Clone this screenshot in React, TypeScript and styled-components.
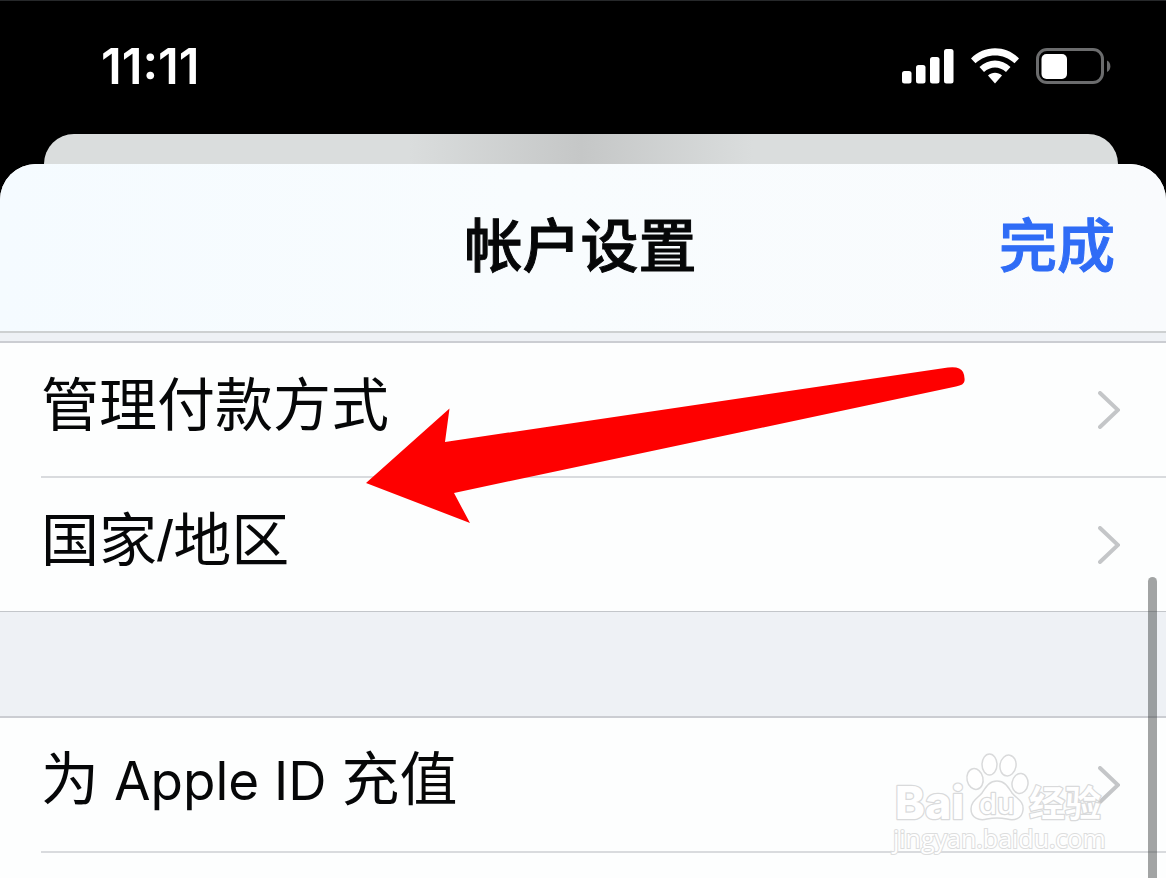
import React from "react";
import styled, { createGlobalStyle } from "styled-components";

const GlobalStyle = createGlobalStyle`
  *, *::before, *::after { box-sizing: border-box; }
  body {
    margin: 0;
    background: #000;
    font-family: Inter, "Noto Sans CJK SC", sans-serif;
    color: #060708;
  }
`;

const Screen = styled.div`
  position: relative;
  display: flex;
  flex-direction: column;
  min-height: 100vh;
  overflow: hidden;
  background: #000;
  border-top: 1px solid #26282a;
`;

const StatusBar = styled.div`
  display: flex;
  align-items: center;
  justify-content: space-between;
  height: 133px;
  padding: 0 55px 3px 101px;
`;

const Time = styled.time`
  padding-top: 2px;
  font-size: 49px;
  line-height: 56px;
  font-weight: 600;
  color: #fff;
`;

const StatusIcons = styled.div`
  display: flex;
  align-items: center;
  gap: 17px;

  svg { display: block; }
`;

const BackCard = styled.div`
  height: 30px;
  margin: 0 48px 0 44px;
  border-radius: 30px 30px 0 0;
  background: linear-gradient(90deg, #dadddd 34%, #c5c7c7 50%, #dadddd 66%);
`;

const Sheet = styled.main`
  position: relative;
  display: flex;
  flex: 1;
  flex-direction: column;
  border-radius: 36px 36px 0 0;
  background: #fdfefe;
  overflow: hidden;
`;

const Header = styled.header`
  display: grid;
  grid-template-columns: 1fr auto 1fr;
  align-items: center;
  height: 169px;
  padding: 0 51px 3px 46px;
  border-bottom: 2px solid #cdd0d1;
  background: linear-gradient(90deg, #f5fbff, #f8fcfe 45%, #f9fbfd);
`;

const Title = styled.h1`
  grid-column: 2;
  margin: 0;
  font-size: 58px;
  line-height: 84px;
  font-weight: 500;
  -webkit-text-stroke: 1px currentColor;
`;

const DoneButton = styled.button`
  justify-self: end;
  padding: 0;
  border: 0;
  background: none;
  font: inherit;
  font-size: 58px;
  line-height: 84px;
  font-weight: 500;
  -webkit-text-stroke: 1px currentColor;
  color: #2f6cf6;
  cursor: pointer;
`;

const SectionGap = styled.div<{ $height: number }>`
  height: ${({ $height }) => $height}px;
  border-bottom: 2px solid #cbcdd2;
  background: #eef1f5;
`;

const Group = styled.ul<{ $closed?: boolean }>`
  margin: 0;
  padding: 0;
  list-style: none;
  border-bottom: ${({ $closed }) => ($closed ? "1px solid #c3c6ca" : "0")};
`;

const Item = styled.li<{ $divider?: boolean }>`
  margin-left: 41px;
  border-bottom: ${({ $divider }) => ($divider ? "2px solid #d9dbde" : "0")};
`;

const RowLink = styled.a`
  display: flex;
  align-items: center;
  justify-content: space-between;
  height: 133px;
  padding-right: 46px;
  color: inherit;
  text-decoration: none;

  svg { display: block; }
`;

const RowLabel = styled.span`
  padding-bottom: 10px;
  font-size: 58px;
  line-height: 84px;
  white-space: nowrap;
`;

const Latin = styled.span`
  font-size: 53px;
`;

const Slash = styled.span`
  font-family: "Liberation Sans", sans-serif;
  font-size: 58px;
  line-height: 1;
`;

const ScrollThumb = styled.div`
  position: absolute;
  top: 413px;
  right: 9px;
  bottom: -10px;
  width: 9px;
  border-radius: 5px;
  background: rgba(60, 64, 64, 0.47);
`;

const ArrowMark = styled.svg`
  position: absolute;
  top: 202px;
  left: 366px;
  pointer-events: none;
`;

const Watermark = styled.div`
  position: absolute;
  right: 61px;
  bottom: 26px;
  width: 212px;
  pointer-events: none;

  svg { display: block; overflow: visible; }
`;

const WatermarkUrl = styled.div`
  font-family: "Open Sans", "Noto Sans", sans-serif;
  font-size: 25px;
  line-height: 28px;
  text-align: center;
  white-space: nowrap;
  color: #fff;
  -webkit-text-stroke: 2px #dcdddd;
  paint-order: stroke fill;
`;

const Chevron = () => (
  <svg width="22" height="38" viewBox="0 0 22 38" fill="none" aria-hidden="true">
    <path d="M2 2L20 19L2 36" stroke="#c4c6c8" strokeWidth="4" strokeLinejoin="miter" strokeLinecap="round" />
  </svg>
);

const Signal = () => (
  <svg width="52" height="36" viewBox="0 0 52 36" fill="#fff" aria-hidden="true">
    <rect x="0" y="23" width="9.5" height="12.5" rx="2.5" />
    <rect x="14" y="17" width="9.5" height="18.5" rx="2.5" />
    <rect x="28" y="9" width="9.5" height="26.5" rx="2.5" />
    <rect x="42" y="1" width="9.5" height="34.5" rx="2.5" />
  </svg>
);

const Wifi = () => (
  <svg width="48" height="36" viewBox="0 0 48 36" fill="#fff" aria-hidden="true">
    <path d="M0 10.5C13-3.2 35-3.2 48 10.5L43.5 15.2C32.5 4.8 15.5 4.8 4.5 15.2Z" />
    <path d="M8.5 19C17.2 10.2 30.8 10.2 39.5 19L35 24C28.5 18 19.5 18 13 24Z" />
    <path d="M17 27.5C21 23.8 27 23.8 31 27.5L24 35.5Z" />
  </svg>
);

const Battery = () => (
  <svg width="75" height="36" viewBox="0 0 75 36" fill="none" aria-hidden="true">
    <rect x="1.5" y="1.5" width="65" height="33" rx="9.5" stroke="#6b6c6d" strokeWidth="3" />
    <rect x="5.5" y="6" width="25.5" height="25" rx="5" fill="#fff" />
    <path d="M71 12.5C75.5 14.5 75.5 22 71 24Z" fill="#6b6c6d" />
  </svg>
);

const BaiduLogo = () => (
  <svg width="212" height="72" viewBox="0 0 212 72" aria-hidden="true">
    <g fill="#fff" stroke="#d9dadb" strokeWidth="1.5">
      <ellipse cx="82" cy="27" rx="8" ry="10.5" transform="rotate(-12 82 27)" />
      <ellipse cx="96.5" cy="12.5" rx="7.5" ry="10.5" />
      <ellipse cx="115" cy="13.5" rx="8" ry="10.5" transform="rotate(10 115 13.5)" />
      <ellipse cx="127" cy="31.5" rx="8" ry="10" transform="rotate(8 127 31.5)" />
      <path d="M104 29C112 29 115 35 119 41C124 47 131 49 130 58C129 67 121 69 114 67C107 65.5 101 65.5 94 67C86 69 78 66 78 57C78 49 85 46 89 41C93 35 96 29 104 29Z" />
    </g>
    <g fill="#fff" stroke="#d9dadb" strokeWidth="2.5" strokeLinejoin="round" paintOrder="stroke">
      <text x="2" y="67" fontFamily="Inter" fontWeight="800" fontSize="45">Bai</text>
      <text x="86" y="62" fontFamily="Inter" fontWeight="500" fontSize="29">du</text>
      <text x="136" y="65" fontFamily="Noto Sans CJK SC" fontWeight="700" fontSize="36">经验</text>
    </g>
  </svg>
);

export default function App() {
  return (
    <>
      <GlobalStyle />
      <Screen lang="zh-CN">
        <StatusBar>
          <Time>11:11</Time>
          <StatusIcons>
            <Signal />
            <Wifi />
            <Battery />
          </StatusIcons>
        </StatusBar>
        <BackCard />
        <Sheet>
          <Header>
            <Title>帐户设置</Title>
            <DoneButton type="button">完成</DoneButton>
          </Header>
          <SectionGap $height={10} />
          <Group $closed>
            <Item $divider>
              <RowLink href="#payment">
                <RowLabel>管理付款方式</RowLabel>
                <Chevron />
              </RowLink>
            </Item>
            <Item>
              <RowLink href="#region">
                <RowLabel>国家<Slash>/</Slash>地区</RowLabel>
                <Chevron />
              </RowLink>
            </Item>
          </Group>
          <SectionGap $height={106} />
          <Group>
            <Item $divider>
              <RowLink href="#top-up">
                <RowLabel>
                  为<Latin> Apple ID </Latin>充值
                </RowLabel>
                <Chevron />
              </RowLink>
            </Item>
          </Group>
          <Watermark>
            <BaiduLogo />
            <WatermarkUrl>jingyan.baidu.com</WatermarkUrl>
          </Watermark>
          <ArrowMark width="600" height="158" viewBox="0 0 600 158" aria-hidden="true">
            <path
              d="M0 117L83.5 42.5L79 76L582 1.5Q594 0 597 6Q599 10 598.5 15Q598 19 590 20.5L88 127L104 157Z"
              fill="#fe0000"
            />
          </ArrowMark>
          <ScrollThumb />
        </Sheet>
      </Screen>
    </>
  );
}
